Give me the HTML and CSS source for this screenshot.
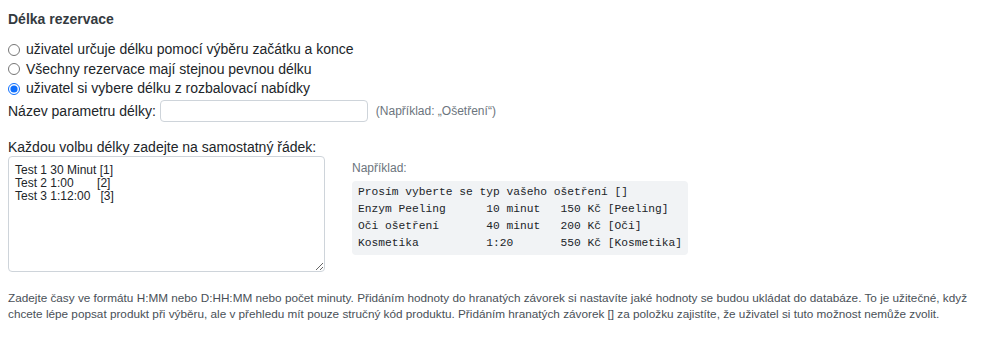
FILE: index.html
```html
<!DOCTYPE html>
<html lang="cs">
<head>
<meta charset="utf-8">
<link rel="stylesheet" href="styles.css">
</head>
<body>
<div class="page">
  <h4 class="title">Délka rezervace</h4>
  <div class="radios">
    <label class="radio"><input type="radio" name="mode"> uživatel určuje délku pomocí výběru začátku a konce</label>
    <label class="radio"><input type="radio" name="mode"> Všechny rezervace mají stejnou pevnou délku</label>
    <label class="radio"><input type="radio" name="mode" checked> uživatel si vybere délku z rozbalovací nabídky</label>
  </div>
  <div class="param-row">
    <label class="param-label">Název parametru délky:</label>
    <input class="param-input" type="text">
    <span class="hint">(Například: „Ošetření“)</span>
  </div>
  <div class="options-label">Každou volbu délky zadejte na samostatný řádek:</div>
  <div class="options-row">
    <textarea class="options">Test 1 30 Minut [1]
Test 2 1:00       [2]
Test 3 1:12:00   [3]</textarea>
    <div class="example">
      <div class="example-label">Například:</div>
      <pre class="example-code">Prosím vyberte se typ vašeho ošetření []
Enzym Peeling      10 minut   150 Kč [Peeling]
Oči ošetření       40 minut   200 Kč [Oči]
Kosmetika          1:20       550 Kč [Kosmetika]</pre>
    </div>
  </div>
  <p class="help">Zadejte časy ve formátu H:MM nebo D:HH:MM nebo počet minuty. Přidáním hodnoty do hranatých závorek si nastavíte jaké hodnoty se budou ukládat do databáze. To je užitečné, když chcete lépe popsat produkt při výběru, ale v přehledu mít pouze stručný kód produktu. Přidáním hranatých závorek [] za položku zajistíte, že uživatel si tuto možnost nemůže zvolit.</p>
</div>
</body>
</html>
```
FILE: styles.css
```css
html, body {
  margin: 0;
  padding: 0;
  background: #fff;
}
body {
  font-family: "Liberation Sans", Arial, sans-serif;
  color: #212529;
  font-size: 14px;
}
.page {
  padding: 11px 8px 0 8px;
}
.title {
  margin: 0 0 12px 0;
  font-size: 14px;
  font-weight: bold;
  line-height: 17px;
  color: #343a40;
}
.radios {
  display: flex;
  flex-direction: column;
}
.radio {
  display: flex;
  align-items: center;
  line-height: 19.5px;
  height: 19.5px;
}
.radio input {
  margin: 0 6px 0 0;
  width: 12px;
  height: 12px;
  accent-color: #0d6efd;
}
.param-row {
  display: flex;
  align-items: center;
  margin-top: 1px;
}
.param-label {
  line-height: 20px;
  margin-right: 4px;
}
.param-input {
  width: 208px;
  height: 22px;
  box-sizing: border-box;
  border: 1px solid #ced4da;
  border-radius: 4px;
  margin: 0;
  padding: 2px 6px;
  font: inherit;
}
.hint {
  margin-left: 8px;
  font-size: 12px;
  color: #6c757d;
}
.options-label {
  margin-top: 15px;
  line-height: 20px;
}
.options-row {
  display: flex;
  align-items: flex-start;
  margin-top: -1px;
}
.options {
  width: 317px;
  height: 116px;
  box-sizing: border-box;
  margin: 0;
  border: 1px solid #ced4da;
  border-radius: 4px;
  padding: 7px 6px 5px 6px;
  font-family: "Liberation Sans", Arial, sans-serif;
  font-size: 12px;
  line-height: 13px;
  color: #212529;
  resize: vertical;
}
.example {
  margin-left: 27px;
  padding-top: 5px;
}
.example-label {
  font-size: 12px;
  line-height: 15px;
  color: #6c757d;
}
.example-code {
  margin: 5px 0 0 0;
  padding: 3px 6px 3px 6px;
  background: #f1f3f5;
  border-radius: 4px;
  font-family: "Liberation Mono", "DejaVu Sans Mono", monospace;
  font-size: 11.25px;
  line-height: 17px;
  color: #212529;
}
.help {
  margin: 18px 0 0 0;
  font-size: 11.75px;
  line-height: 16px;
  color: #495057;
}
```
